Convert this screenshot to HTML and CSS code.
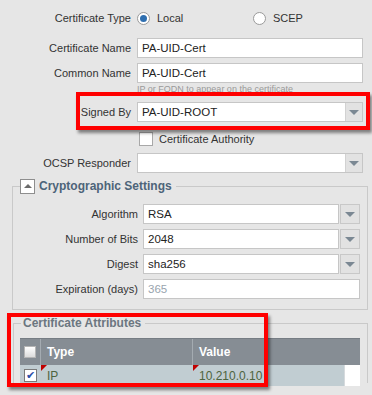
FILE: index.html
```html
<!DOCTYPE html>
<html lang="en">
<head>
    <meta charset="UTF-8">
    <title>Certificate</title>
    <link rel="stylesheet" href="styles.css">
</head>
<body>
    <div class="page">
        <div class="row row-type">
            <span class="lbl">Certificate Type</span>
            <div class="radios">
                <span class="opt"><span class="radio on"></span>Local</span>
                <span class="opt"><span class="radio"></span>SCEP</span>
            </div>
        </div>
        <div class="row gap10">
            <span class="lbl">Certificate Name</span>
            <div class="input">PA-UID-Cert</div>
        </div>
        <div class="row gap5">
            <span class="lbl">Common Name</span>
            <div class="input">PA-UID-Cert</div>
        </div>
        <div class="hint">IP or FQDN to appear on the certificate</div>
        <div class="row gap8">
            <span class="lbl">Signed By</span>
            <div class="select">
                <div class="sel-text">PA-UID-ROOT</div>
                <div class="sel-btn"><span class="arrow"></span></div>
            </div>
        </div>
        <div class="row row-check">
            <span class="lbl"></span>
            <span class="check"></span>
            <span class="check-text">Certificate Authority</span>
        </div>
        <div class="row gap8">
            <span class="lbl">OCSP Responder</span>
            <div class="select">
                <div class="sel-text"></div>
                <div class="sel-btn"><span class="arrow"></span></div>
            </div>
        </div>

        <fieldset class="group crypto">
            <legend><span class="toggle"><span class="up"></span></span>Cryptographic Settings</legend>
            <div class="grow">
                <span class="glbl">Algorithm</span>
                <div class="select split">
                    <div class="sel-text">RSA</div>
                    <div class="sel-btn"><span class="arrow"></span></div>
                </div>
            </div>
            <div class="grow">
                <span class="glbl">Number of Bits</span>
                <div class="select split">
                    <div class="sel-text">2048</div>
                    <div class="sel-btn"><span class="arrow"></span></div>
                </div>
            </div>
            <div class="grow">
                <span class="glbl">Digest</span>
                <div class="select split">
                    <div class="sel-text">sha256</div>
                    <div class="sel-btn"><span class="arrow"></span></div>
                </div>
            </div>
            <div class="grow">
                <span class="glbl">Expiration (days)</span>
                <div class="input wide muted">365</div>
            </div>
        </fieldset>

        <fieldset class="group attrs">
            <legend>Certificate Attributes</legend>
            <div class="grid">
                <div class="grid-head">
                    <div class="c-chk"><span class="hchk"></span></div>
                    <div class="c-type">Type</div>
                    <div class="c-val">Value</div>
                </div>
                <div class="grid-row">
                    <div class="c-chk"><span class="rchk">&#10004;</span></div>
                    <div class="c-type"><span class="dirty"></span>IP</div>
                    <div class="c-val"><span class="dirty"></span>10.210.0.10</div>
                    <div class="c-pad"></div>
                </div>
            </div>
        </fieldset>

        <!-- annotation boxes -->
        <div class="mark mark-signed"></div>
        <div class="mark mark-attrs"></div>
    </div>
</body>
</html>
```

FILE: styles.css
```css
body {
    margin: 0;
    background: #e6e6e6;
    font-family: "Liberation Sans", Arial, sans-serif;
    font-size: 11px;
    color: #333;
    overflow: hidden;
}
.page {
    position: relative;
    width: 372px;
    height: 395px;
    padding-top: 8px;
    box-sizing: border-box;
}
.row {
    display: flex;
    align-items: center;
    height: 20px;
}
.gap5 { margin-top: 5px; }
.gap8 { margin-top: 8px; }
.gap10 { margin-top: 10px; }
.lbl {
    width: 137px;
    padding-right: 6px;
    box-sizing: border-box;
    text-align: right;
    flex: none;
}
.radios {
    display: flex;
    align-items: center;
}
.opt {
    display: flex;
    align-items: center;
    width: 116px;
}
.radio {
    width: 11px;
    height: 11px;
    border: 1px solid #9a9a9a;
    border-radius: 50%;
    background: #fff;
    margin-right: 7px;
    position: relative;
    flex: none;
}
.radio.on::after {
    content: "";
    position: absolute;
    left: 2px;
    top: 2px;
    width: 7px;
    height: 7px;
    border-radius: 50%;
    background: #2f6fb0;
}
.input {
    width: 226px;
    height: 20px;
    box-sizing: border-box;
    border: 1px solid #c6c6c6;
    background: #fff;
    padding-left: 4px;
    line-height: 18px;
    font-size: 11.5px;
    color: #222;
}
.input.wide {
    width: 217px;
}
.muted {
    color: #98a4ae;
}
.hint {
    margin-left: 137px;
    height: 10px;
    line-height: 10px;
    font-size: 9px;
    color: #9a9a9a;
    margin-top: 1px;
}
.select {
    width: 226px;
    height: 20px;
    display: flex;
    border: 1px solid #c6c6c6;
    box-sizing: border-box;
    background: #fff;
}
.sel-text {
    flex: 1;
    padding-left: 4px;
    line-height: 18px;
    font-size: 11.5px;
    color: #222;
}
.sel-btn {
    width: 16px;
    background: #e2e2e2;
    border-left: 1px solid #d2d2d2;
    display: flex;
    align-items: center;
    justify-content: center;
}
.arrow {
    width: 0;
    height: 0;
    border-left: 5px solid transparent;
    border-right: 5px solid transparent;
    border-top: 5px solid #7b8893;
}
.select.split {
    width: 217px;
    border: none;
    background: transparent;
}
.select.split .sel-text {
    border: 1px solid #c6c6c6;
    background: #fff;
}
.select.split .sel-btn {
    width: 18px;
    border: 1px solid #c8c8c8;
    margin-left: 1px;
}
.row-check {
    margin-top: 10px;
    height: 13px;
}
.check {
    width: 12px;
    height: 12px;
    border: 1px solid #a8a8a8;
    background: #fff;
    margin-left: 2px;
    margin-right: 6px;
}
.group {
    margin: 0;
    border: 1px solid #c9c9c9;
    padding: 0;
}
.group legend {
    height: 16px;
    line-height: 16px;
    font-weight: bold;
    font-size: 12px;
    padding: 0 4px 0 0;
    display: flex;
    align-items: center;
}
.crypto {
    margin: 5px 4px 0 12px;
    padding: 10px 0 10px 0;
}
.crypto legend {
    margin-left: 7px;
    color: #4d6479;
}
.toggle {
    width: 13px;
    height: 13px;
    border: 1px solid #8e8e8e;
    background: #fff;
    margin-right: 4px;
    display: flex;
    align-items: center;
    justify-content: center;
}
.up {
    width: 0;
    height: 0;
    border-left: 4px solid transparent;
    border-right: 4px solid transparent;
    border-bottom: 4px solid #6b6b6b;
}
.grow {
    display: flex;
    align-items: center;
    height: 20px;
    margin-bottom: 5px;
}
.grow:last-child {
    margin-bottom: 0;
}
.glbl {
    width: 130px;
    padding-right: 5px;
    box-sizing: border-box;
    text-align: right;
}
.attrs {
    margin: 5px 4px 0 13px;
    padding: 7px 6px 0 6px;
    border-bottom: none;
    height: 60px;
}
.attrs legend {
    margin-left: 1px;
    padding-left: 2px;
    color: #6b7680;
}
.grid {
    width: 340px;
    font-size: 12px;
}
.grid-head {
    display: flex;
    height: 27px;
    background: #868d94;
    color: #fff;
    font-weight: bold;
    border-top: 1px solid #767d84;
    box-sizing: border-box;
}
.grid-head > div,
.grid-row > div {
    display: flex;
    align-items: center;
    position: relative;
}
.c-chk {
    width: 20px;
    justify-content: center;
}
.c-type {
    width: 152px;
    padding-left: 6px;
    box-sizing: border-box;
    border-left: 1px solid #a4abb1;
}
.c-val {
    flex: 1;
    padding-left: 6px;
    box-sizing: border-box;
    border-left: 1px solid #a4abb1;
}
.grid-row {
    display: flex;
    height: 21px;
    background: #fff;
    color: #4d6440;
}
.grid-row .c-chk,
.grid-row .c-type,
.grid-row .c-val {
    background: #c1cdd2;
    border-left-color: #c1cdd2;
}
.grid-row .c-val {
    flex: none;
    width: 152px;
}
.c-pad {
    flex: 1;
    border-left: 1px solid #d6dadd;
}
.hchk {
    width: 10px;
    height: 10px;
    border: 1px solid #b5b5b5;
    background: linear-gradient(#fff, #dcdcdc);
}
.rchk {
    width: 11px;
    height: 11px;
    border: 1px solid #7a7a7a;
    background: #fff;
    color: #2a4fa8;
    font-size: 11px;
    line-height: 11px;
    text-align: center;
}
.dirty {
    position: absolute;
    left: 0;
    top: 0;
    width: 0;
    height: 0;
    border-top: 6px solid #c00000;
    border-right: 6px solid transparent;
}
.mark {
    position: absolute;
    border: 4px solid #ff0000;
    box-shadow: 2px 3px 3px rgba(0, 0, 0, 0.45);
}
.mark-signed {
    left: 76px;
    top: 92px;
    width: 286px;
    height: 30px;
}
.mark-attrs {
    left: 7px;
    top: 313px;
    width: 253px;
    height: 66px;
}
```
